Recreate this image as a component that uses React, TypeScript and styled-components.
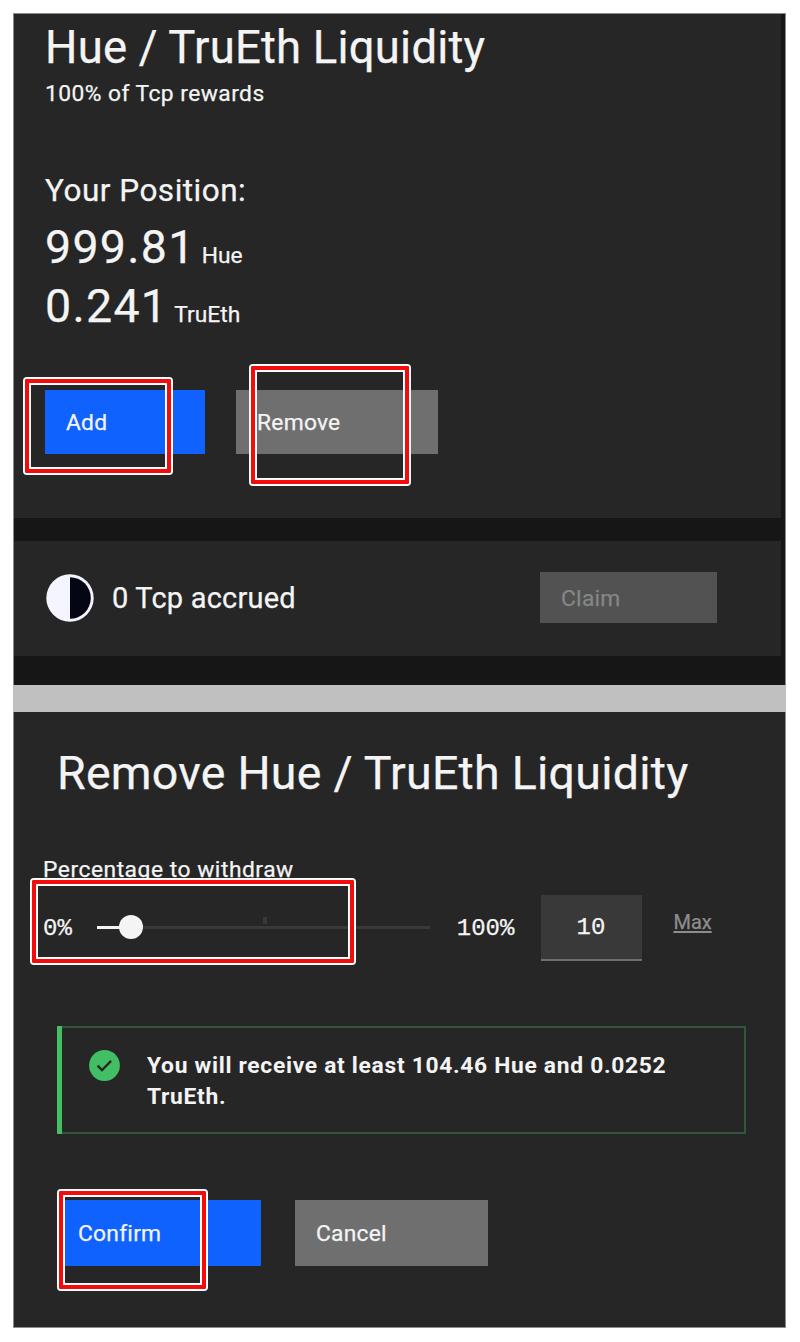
import { useState } from "react";
import styled, { createGlobalStyle } from "styled-components";

const GlobalStyle = createGlobalStyle`
  * {
    box-sizing: border-box;
  }
  body {
    margin: 0;
    background: #ffffff;
    font-family: 'Roboto', 'Liberation Sans', sans-serif;
    color: #f4f4f4;
    -webkit-text-stroke: 0.25px;
  }
`;

const Page = styled.div`
  width: 800px;
  height: 1342px;
  padding: 13px 14px 14px 13px;
  background: #ffffff;
`;

const Frame = styled.main`
  width: 773px;
  height: 1315px;
  display: flex;
  flex-direction: column;
  border: 1px solid #8c8c8c;
  background: #262626;
`;

const Overview = styled.div`
  height: 671px;
  display: flex;
  flex-direction: column;
  padding-right: 4px;
  background: #161616;
`;

const PositionCard = styled.section`
  height: 504px;
  padding: 7px 0 0 31px;
  background: #262626;
`;

const Title = styled.h1`
  margin: 0;
  font-size: 45.5px;
  font-weight: 400;
  line-height: 54px;
  letter-spacing: 0.2px;
  white-space: nowrap;
`;

const Subtitle = styled.p`
  margin: 5px 0 0;
  font-size: 22.8px;
  line-height: 28px;
  letter-spacing: 0.45px;
`;

const PositionTitle = styled.h2`
  margin: 63px 0 7px;
  font-size: 31.5px;
  font-weight: 400;
  line-height: 40px;
  letter-spacing: 0.5px;
`;

const Amount = styled.div`
  display: flex;
  align-items: baseline;
  gap: 6px;
  height: 59px;
  line-height: 59px;
`;

const AmountValue = styled.span`
  font-size: 46.5px;
  letter-spacing: 1.3px;
`;

const AmountUnit = styled.span`
  font-size: 22.8px;
`;

const Actions = styled.div<{ $gap: number }>`
  display: flex;
  gap: ${(p) => p.$gap}px;
`;

const PositionActions = styled(Actions)`
  margin-top: 54px;
`;

const Button = styled.button<{ $width: number; $height: number; $kind?: "primary" | "secondary" }>`
  position: relative;
  width: ${(p) => p.$width}px;
  height: ${(p) => p.$height}px;
  padding: 0 0 0 21px;
  border: none;
  background: ${(p) => (p.$kind === "primary" ? "#0f62fe" : "#6f6f6f")};
  color: #f4f4f4;
  font-family: inherit;
  font-size: 22.8px;
  letter-spacing: 0.25px;
  text-align: left;

  &:disabled {
    padding-top: 2px;
    background: #525252;
    color: #868686;
  }
`;

/* red marker drawn over the step the user has to follow */
const Marker = styled.span<{ $x: number; $y: number; $w: number; $h: number }>`
  position: absolute;
  left: ${(p) => p.$x}px;
  top: ${(p) => p.$y}px;
  width: ${(p) => p.$w}px;
  height: ${(p) => p.$h}px;
  border: 4px solid #f40b0b;
  border-radius: 2px;
  box-shadow: 0 0 0 2px #ffffff, inset 0 0 0 2px #ffffff;
  pointer-events: none;
`;

const RewardsCard = styled.section`
  height: 115px;
  margin-top: 23px;
  padding: 0 64px 2px 32px;
  display: flex;
  align-items: center;
  background: #262626;
`;

const Accrued = styled.span`
  flex: 1;
  margin-left: 18px;
  font-size: 29px;
  letter-spacing: 0.2px;
`;

const Divider = styled.div`
  height: 27px;
  margin: 0 -1px;
  background: #c0c0c0;
`;

const RemovePanel = styled.section`
  flex: 1;
  padding: 34px 39px 0 43px;
`;

const RemoveTitle = styled(Title)`
  font-size: 46.5px;
  letter-spacing: 0.25px;
`;

const Label = styled.label`
  display: block;
  margin: 56px 0 0 -14px;
  font-size: 22.8px;
  line-height: 28px;
  letter-spacing: 0.53px;
`;

const SliderRow = styled.div`
  position: relative;
  display: flex;
  align-items: center;
  height: 66px;
  margin: 11px 0 0 -14px;
`;

const RangeLabel = styled.span`
  margin-top: 1px;
  font-family: 'Liberation Mono', monospace;
  font-size: 24px;
`;

const Track = styled.div`
  position: relative;
  width: 333px;
  height: 3px;
  margin: -1px 27px 0 25px;
  background: #393939;
`;

const TrackFill = styled.div`
  height: 3px;
  background: #f4f4f4;
`;

const Tick = styled.span`
  position: absolute;
  left: 166px;
  top: -9px;
  width: 4px;
  height: 7px;
  background: #393939;
`;

const Thumb = styled.span`
  position: absolute;
  top: -11px;
  width: 24px;
  height: 24px;
  margin-left: -11px;
  border-radius: 50%;
  background: #f4f4f4;
`;

const PercentInput = styled.input`
  width: 101px;
  height: 66px;
  margin-left: 27px;
  padding: 0 2px 0 0;
  border: none;
  border-bottom: 2px solid #6f6f6f;
  border-radius: 0;
  outline: none;
  background: #393939;
  color: #f4f4f4;
  font-family: 'Liberation Mono', monospace;
  font-size: 24px;
  text-align: center;
`;

const MaxLink = styled.a`
  margin: -12px 0 0 31px;
  color: #8d8d8d;
  font-size: 20px;
  text-decoration: underline;
  text-decoration-thickness: 1.5px;
  text-underline-offset: 2px;
`;

const Notification = styled.div`
  position: relative;
  display: flex;
  height: 108px;
  margin-top: 65px;
  padding: 22px 0 0 32px;
  border: 2px solid #30573b;
  border-left: none;

  &::before {
    content: '';
    position: absolute;
    left: 0;
    top: -2px;
    bottom: -2px;
    width: 5px;
    background: #42be65;
  }
`;

const Message = styled.p`
  width: 560px;
  margin: 0 0 0 27px;
  font-size: 22.8px;
  font-weight: 700;
  line-height: 31px;
  letter-spacing: 0.7px;
  -webkit-text-stroke: 0;
`;

const ConfirmActions = styled(Actions)`
  margin-top: 66px;
`;

function TcpIcon() {
  return (
    <svg width="48" height="48" viewBox="0 0 48 48">
      <circle cx="24" cy="24" r="23.7" fill="#f5f5ff" />
      <path d="M24 3.2a20.8 20.8 0 0 1 0 41.6z" fill="#050614" />
    </svg>
  );
}

function SuccessIcon() {
  return (
    <svg width="31" height="31" viewBox="0 0 31 31">
      <circle cx="15.5" cy="15.5" r="15.4" fill="#42be65" />
      <path d="M8.6 15.6l4.4 4.4 9.1-9.1" fill="none" stroke="#262626" strokeWidth="2.3" />
    </svg>
  );
}

export default function App() {
  const [percent, setPercent] = useState(10);

  return (
    <>
      <GlobalStyle />
      <Page>
        <Frame>
          <Overview>
            <PositionCard>
              <Title>Hue / TruEth Liquidity</Title>
              <Subtitle>100% of Tcp rewards</Subtitle>
              <PositionTitle>Your Position:</PositionTitle>
              <Amount>
                <AmountValue>999.81</AmountValue>
                <AmountUnit>Hue</AmountUnit>
              </Amount>
              <Amount>
                <AmountValue>0.241</AmountValue>
                <AmountUnit>TruEth</AmountUnit>
              </Amount>
              <PositionActions $gap={31}>
                <Button $width={160} $height={64} $kind="primary">
                  Add
                  <Marker $x={-20} $y={-11} $w={146} $h={94} />
                </Button>
                <Button $width={202} $height={64}>
                  Remove
                  <Marker $x={15} $y={-24} $w={158} $h={118} />
                </Button>
              </PositionActions>
            </PositionCard>
            <RewardsCard>
              <TcpIcon />
              <Accrued>0 Tcp accrued</Accrued>
              <Button $width={177} $height={51} disabled>
                Claim
              </Button>
            </RewardsCard>
          </Overview>
          <Divider />
          <RemovePanel>
            <RemoveTitle>Remove Hue / TruEth Liquidity</RemoveTitle>
            <Label>Percentage to withdraw</Label>
            <SliderRow>
              <RangeLabel>0%</RangeLabel>
              <Track>
                <TrackFill style={{ width: `${percent}%` }} />
                <Tick />
                <Thumb style={{ left: `${percent}%` }} />
              </Track>
              <RangeLabel>100%</RangeLabel>
              <PercentInput value={percent} onChange={(e) => setPercent(Number(e.target.value))} />
              <MaxLink onClick={() => setPercent(100)}>Max</MaxLink>
              <Marker $x={-11} $y={-15} $w={322} $h={83} />
            </SliderRow>
            <Notification>
              <SuccessIcon />
              <Message>You will receive at least 104.46 Hue and 0.0252 TruEth.</Message>
            </Notification>
            <ConfirmActions $gap={34}>
              <Button $width={204} $height={66} $kind="primary">
                Confirm
                <Marker $x={2} $y={-9} $w={147} $h={98} />
              </Button>
              <Button $width={193} $height={66}>
                Cancel
              </Button>
            </ConfirmActions>
          </RemovePanel>
        </Frame>
      </Page>
    </>
  );
}
